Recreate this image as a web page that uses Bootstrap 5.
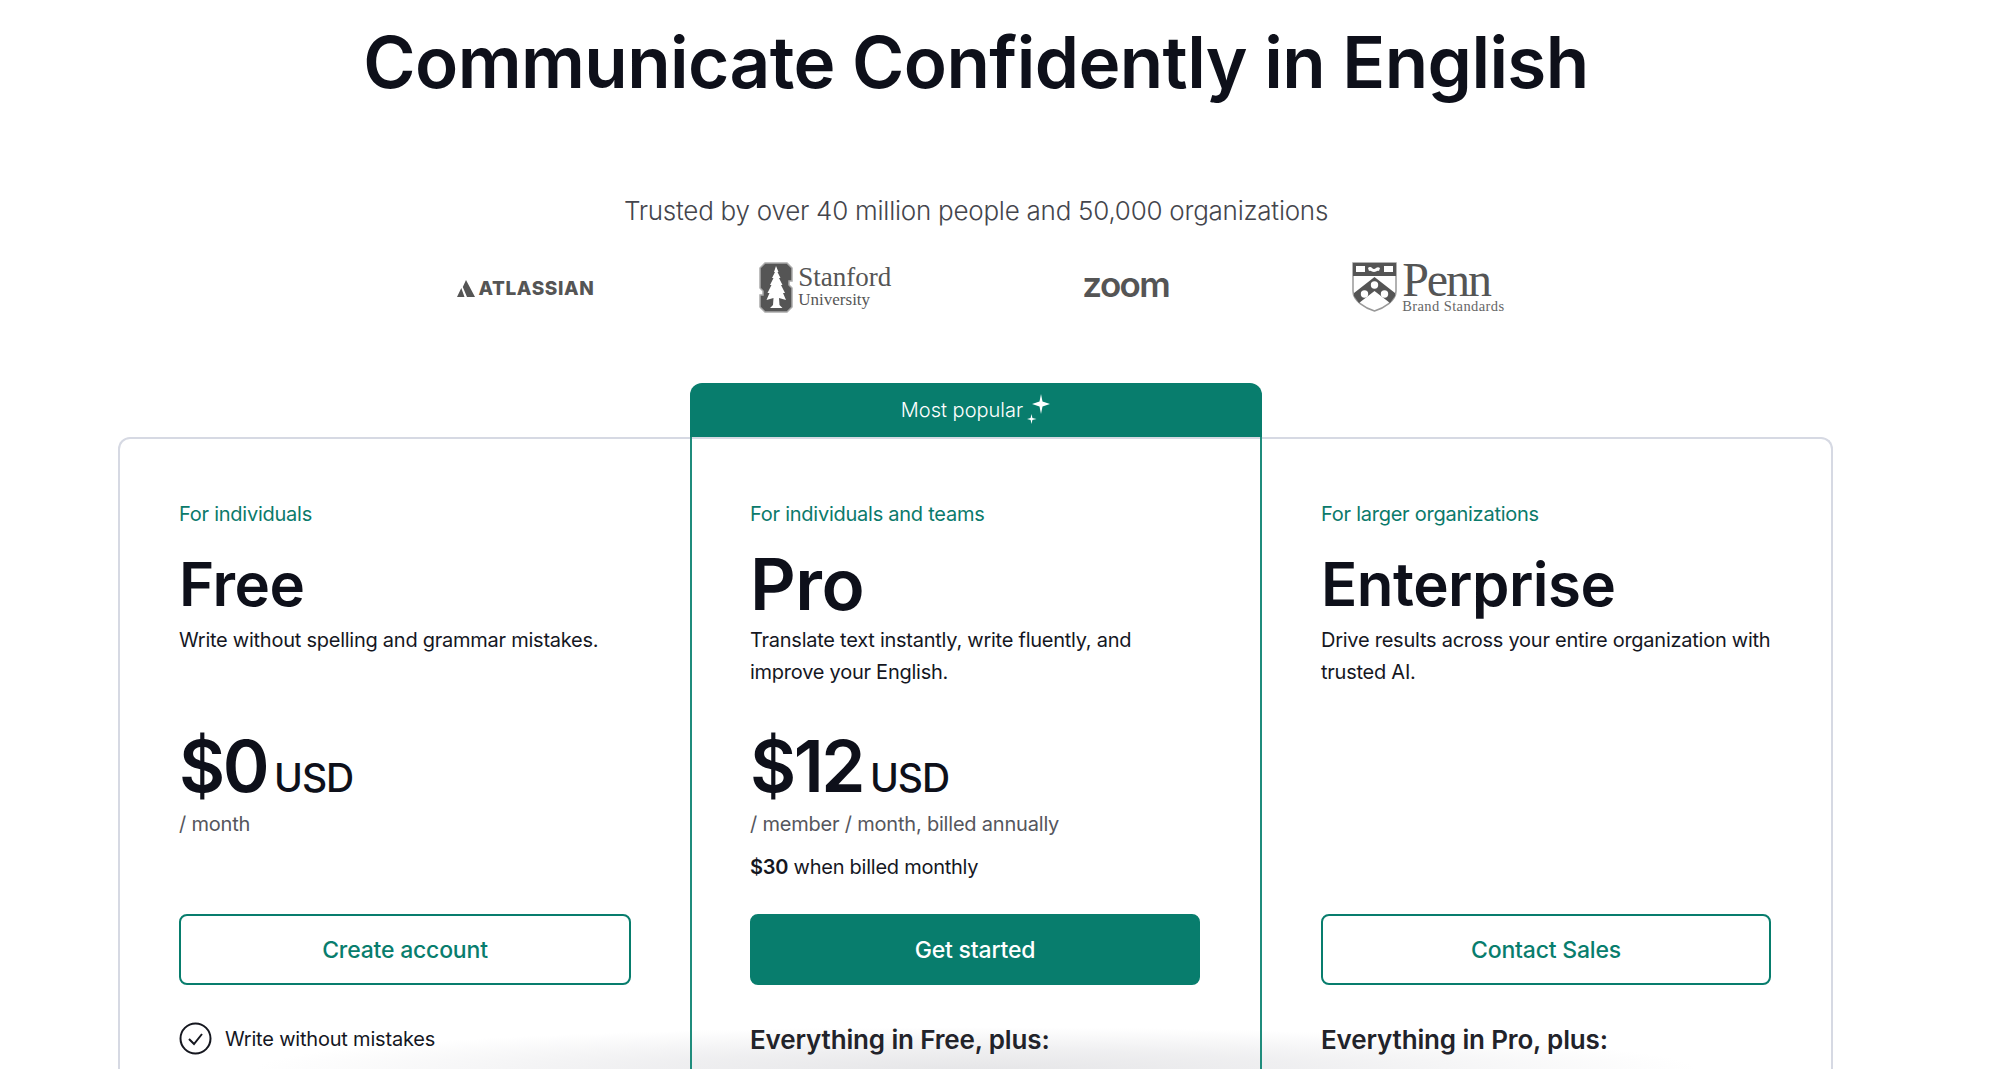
<!doctype html>
<html lang="en"><head><meta charset="utf-8"><title>Pricing</title>
<link href="https://cdn.jsdelivr.net/npm/bootstrap@5.3.0/dist/css/bootstrap.min.css" rel="stylesheet">
<style>
html,body{height:1069px;overflow:hidden;background:#fff}
body{font-family:Inter,"Liberation Sans",sans-serif;color:#15171f;font-size:20px}
.page-wrap{width:1952px;height:1069px;z-index:1}
.hero{font-size:71px;font-weight:600;line-height:84px;letter-spacing:-.6px;padding-top:20px;margin:0;color:#0e101a}
.trust{font-size:26px;font-weight:300;color:#44454c;margin-top:89px;line-height:36px;letter-spacing:-.25px}
.logos{height:64px;margin-top:26px;color:#555}
.lg-atl{margin-right:165px;margin-left:9px}
.lg-stan{margin-right:191px;gap:5px}
.lg-zoom{margin-right:183px}
.lg-penn{gap:5px}
.atl-name{font-weight:800;font-size:19px;letter-spacing:.6px;line-height:1;margin-top:2px}
.lg-atl svg{margin-top:2px}
.serif{font-family:"Liberation Serif",serif;line-height:1}
.stan-1{font-size:27px}.stan-2{font-size:17px}
.lg-stan .serif{margin-top:-3px}
.zoom-name{font-size:35px;font-weight:600;letter-spacing:-1.600px;line-height:1;margin-top:-6px}
.penn-1{font-size:48px;letter-spacing:-2.100px;line-height:38px}
.penn-2{font-size:14.500px;color:#666;letter-spacing:.4px}
.plans{width:1715px;margin:118px 119px 0 118px;border:2px solid #d6d9e3;border-bottom:0;border-radius:12px 12px 0 0;height:632px}
.plan{padding:59px 59px 0 59px;flex:0 0 570px;min-width:0;position:relative}
.plan-pro{border-left:2px solid #1f8c7c;border-right:2px solid #1f8c7c;margin-top:-2px;padding:61px 60px 0 58px;flex:0 0 572px}
.plan-ent{padding:59px 60px 0 59px;flex:1 1 0}
.pop{top:-54px;left:-2px;right:-2px;height:54px;background:#087d6d;color:#fff;border-radius:12px 12px 0 0;font-weight:300}
.pop svg{margin-top:-3px;margin-left:4px}
.who{color:#0b7a6b;line-height:32px;letter-spacing:-.25px}
.pname{font-size:60px;font-weight:600;line-height:72px;letter-spacing:-.5px;margin:18px 0 5px;color:#0e101a}
.pname-lg{font-size:71px}
.desc{line-height:31.500px;height:96px;letter-spacing:-.25px;margin-bottom:0;white-space:nowrap}
.amt{line-height:80px;margin-top:5px}
.amt-n{font-size:71px;font-weight:600;letter-spacing:-2.500px;color:#0e101a}
.amt-c{font-size:39px;font-weight:500;letter-spacing:-1px;color:#0e101a;margin-left:7px}
.per{color:#55565d;line-height:32px;margin-top:-17px;letter-spacing:-.2px}
.alt{line-height:32px;margin-top:11px;letter-spacing:-.25px}
.alt b{font-weight:600}
.plan-top{height:416px}
.cta{height:71px;font-size:23px;font-weight:500;border-radius:8px;display:flex;align-items:center;justify-content:center;border:2px solid #087d6d;padding:2px 0 0;letter-spacing:-.2px}
.cta-o{color:#087d6d;background:#fff}
.cta-f{color:#fff;background:#087d6d}
.plus{font-size:26px;font-weight:600;line-height:36px;margin-top:37px;letter-spacing:-.15px;color:#22232a}
.feat{margin-top:37px;line-height:32px;letter-spacing:-.2px;gap:13px}
.fade-out{z-index:0;left:0;right:0;bottom:0;height:44px;background:radial-gradient(ellipse 720px 42px at 976px 100%,rgba(230,230,232,1) 0,rgba(235,235,237,.8) 45%,rgba(255,255,255,0) 100%);pointer-events:none}
</style></head><body>
<div class="page-wrap position-relative">
<h1 class="hero text-center">Communicate Confidently in English</h1>
<div class="trust text-center">Trusted by over 40 million people and 50,000 organizations</div>
<div class="logos d-flex justify-content-center align-items-center">
  <div class="lg-atl d-flex align-items-center gap-1">
    <svg width="18" height="17" viewBox="0 0 18 17"><path fill="#555" d="M9 0L5.800 7 10 17h8zM4.300 8L0 17h7.500z"/></svg>
    <span class="atl-name">ATLASSIAN</span>
  </div>
  <div class="lg-stan d-flex align-items-center">
    <svg width="34" height="51" viewBox="0 0 34 51"><path fill="#555" stroke="#aaa" stroke-width="1.500" d="M6 1h22l5 5v13h-3v4l3 3v19l-5 5H6l-5-5V33h3v-4l-3-3V6z"/><path fill="#fff" d="M17 4l2.500 6-1 0 3 6-1.500 0 3.500 7-1.500 0 4 8-2 0 3 7-7-2 .500 7 3 3H11l3-3 .500-7-7 2 3-7-2 0 4-8-1.500 0 3.500-7-1.500 0 3-6-1 0z"/></svg>
    <div class="serif"><div class="stan-1">Stanford</div><div class="stan-2">University</div></div>
  </div>
  <div class="lg-zoom zoom-name">zoom</div>
  <div class="lg-penn d-flex align-items-center">
    <svg width="45" height="50" viewBox="0 0 45 50"><path fill="#fff" stroke="#999" stroke-width="1.500" d="M1 1h43v28c0 10-12 17-21.500 20C13 46 1 39 1 29z"/><path fill="#555" d="M1 1h43v13H1z"/><path fill="#fff" d="M4 4h9v6H4zM32 4h9v6h-9zM16 6c3-3 4 1 6 1s3-3 6-1l-1 3c-2-1-3 1-5 1s-3-2-5-1z"/><path fill="#555" d="M22.500 15L43 31v3l-5 7-15.500-12L7 41l-5-7v-3z"/><circle cx="22.500" cy="23" r="3.700" fill="#fff"/><circle cx="12.500" cy="32" r="3.700" fill="#fff"/><circle cx="32.500" cy="32" r="3.700" fill="#fff"/></svg>
    <div class="serif"><div class="penn-1">Penn</div><div class="penn-2">Brand Standards</div></div>
  </div>
</div>
<div class="plans d-flex">
  <section class="plan">
    <div class="plan-top">
      <div class="who">For individuals</div>
      <h2 class="pname">Free</h2>
      <p class="desc">Write without spelling and grammar mistakes.</p>
      <div class="amt"><span class="amt-n">$0</span><span class="amt-c">USD</span></div>
      <div class="per">/ month</div>
    </div>
    <a class="btn cta cta-o" href="#">Create account</a>
    <div class="feat d-flex align-items-center">
      <svg width="33" height="33" viewBox="0 0 33 33" fill="none" stroke="#15171f"><circle cx="16.500" cy="16.500" r="15" stroke-width="2"/><path d="M10 17l5 5 8-10" stroke-width="2"/></svg>
      <span>Write without mistakes</span>
    </div>
  </section>
  <section class="plan plan-pro">
    <div class="pop position-absolute d-flex align-items-center justify-content-center">
      <span>Most popular</span>
      <svg width="24" height="30" viewBox="0 0 24 30" fill="#fff"><path d="M14 0l1.500 7.500L23 10l-7.500 2.500L14 20l-1.500-7.500L5 10l7.500-2.500zM4.500 20l.9 4.100L9.500 25l-4.100.9L4.500 30l-.9-4.100L0 25l3.600-.9z"/></svg>
    </div>
    <div class="plan-top">
      <div class="who">For individuals and teams</div>
      <h2 class="pname pname-lg">Pro</h2>
      <p class="desc">Translate text instantly, write fluently, and<br>improve your English.</p>
      <div class="amt"><span class="amt-n">$12</span><span class="amt-c">USD</span></div>
      <div class="per">/ member / month, billed annually</div>
      <div class="alt"><b>$30</b> when billed monthly</div>
    </div>
    <a class="btn cta cta-f" href="#">Get started</a>
    <div class="plus">Everything in Free, plus:</div>
  </section>
  <section class="plan plan-ent">
    <div class="plan-top">
      <div class="who">For larger organizations</div>
      <h2 class="pname">Enterprise</h2>
      <p class="desc">Drive results across your entire organization with<br>trusted AI.</p>
    </div>
    <a class="btn cta cta-o" href="#">Contact Sales</a>
    <div class="plus">Everything in Pro, plus:</div>
  </section>
</div>
</div>
<div class="fade-out position-absolute"></div>
<script src="https://cdn.jsdelivr.net/npm/bootstrap@5.3.0/dist/js/bootstrap.bundle.min.js"></script>
</body></html>
